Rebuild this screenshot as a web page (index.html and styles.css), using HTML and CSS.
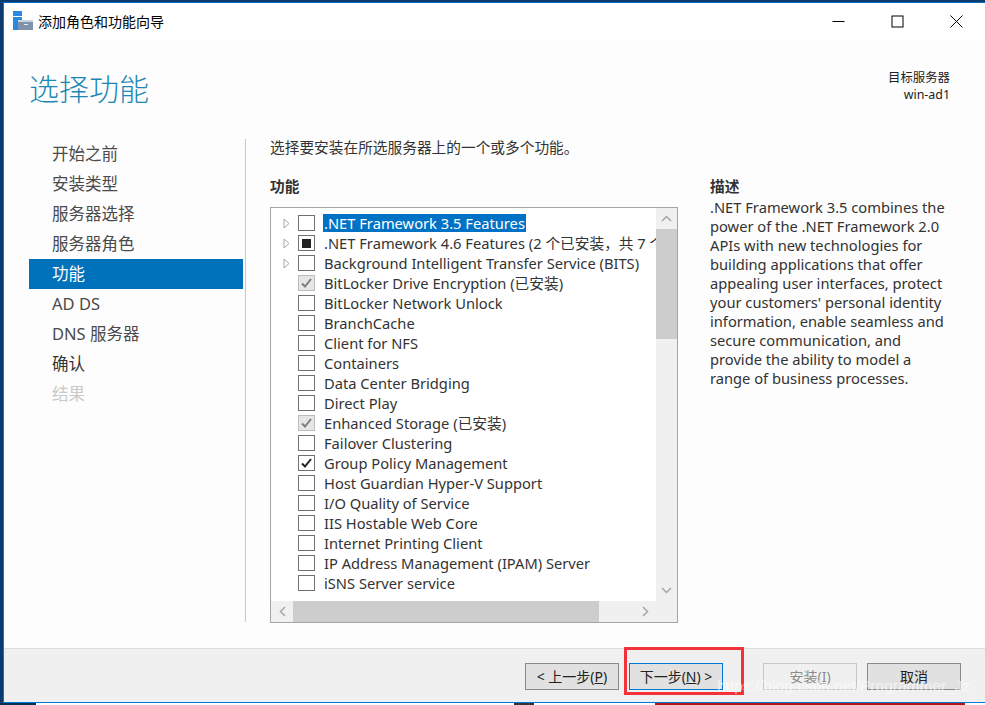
FILE: index.html
```html
<!DOCTYPE html>
<html lang="zh-CN">
<head>
<meta charset="utf-8">
<title>添加角色和功能向导</title>
<link rel="stylesheet" href="styles.css">
</head>
<body>
<div class="desktop">
  <div class="window">
    <header class="titlebar">
      <svg class="app-icon" width="20" height="20" viewBox="0 0 20 20">
        <rect x="0" y="0" width="9" height="5" fill="#2b8ae0"/>
        <rect x="0" y="6" width="9" height="13" fill="#2b8ae0"/>
        <rect x="5" y="9" width="15" height="2" fill="#c9d3df"/>
        <rect x="5" y="11" width="15" height="8" fill="#7f93ad"/>
        <rect x="11" y="13" width="4" height="1" fill="#e8eef5"/>
      </svg>
      <span class="title">添加角色和功能向导</span>
      <div class="controls">
        <svg width="13" height="13" viewBox="0 0 13 13"><path d="M0.5 6.5H12.5" stroke="#000" fill="none"/></svg>
        <svg width="13" height="13" viewBox="0 0 13 13"><rect x="1" y="1" width="11" height="11" stroke="#000" fill="none"/></svg>
        <svg width="13" height="13" viewBox="0 0 13 13"><path d="M0.5 0.5L12.5 12.5M12.5 0.5L0.5 12.5" stroke="#000" fill="none"/></svg>
      </div>
    </header>

    <main class="content">
      <div class="head">
        <h1 class="heading">选择功能</h1>
        <div class="server"><div>目标服务器</div><div>win-ad1</div></div>
      </div>
      <div class="body">
        <nav class="nav">
          <div class="nav-item">开始之前</div>
          <div class="nav-item">安装类型</div>
          <div class="nav-item">服务器选择</div>
          <div class="nav-item">服务器角色</div>
          <div class="nav-item active">功能</div>
          <div class="nav-item">AD DS</div>
          <div class="nav-item">DNS 服务器</div>
          <div class="nav-item strong">确认</div>
          <div class="nav-item off">结果</div>
        </nav>
        <section class="pane">
          <p class="intro">选择要安装在所选服务器上的一个或多个功能。</p>
          <div class="columns">
            <div class="features">
              <h2 class="label">功能</h2>
              <div class="listbox">
                <div class="list-main">
                  <div class="rows">
                    <div class="row"><svg class="tw" width="7" height="11" viewBox="0 0 7 11"><path d="M1 1L6 5.5L1 10Z" fill="#fff" stroke="#a6a6a6"/></svg><span class="cb"></span><span class="txt sel">.NET Framework 3.5 Features</span></div>
                    <div class="row"><svg class="tw" width="7" height="11" viewBox="0 0 7 11"><path d="M1 1L6 5.5L1 10Z" fill="#fff" stroke="#a6a6a6"/></svg><span class="cb part"><i></i></span><span class="txt">.NET Framework 4.6 Features (2 个已安装，共 7 个)</span></div>
                    <div class="row"><svg class="tw" width="7" height="11" viewBox="0 0 7 11"><path d="M1 1L6 5.5L1 10Z" fill="#fff" stroke="#a6a6a6"/></svg><span class="cb"></span><span class="txt">Background Intelligent Transfer Service (BITS)</span></div>
                    <div class="row"><span class="tw-gap"></span><span class="cb dis"><svg width="15" height="14" viewBox="0 0 15 14"><path d="M3 7.5L6 10.5L12 3" fill="none" stroke="#7d7d7d" stroke-width="2"/></svg></span><span class="txt">BitLocker Drive Encryption (已安装)</span></div>
                    <div class="row"><span class="tw-gap"></span><span class="cb"></span><span class="txt">BitLocker Network Unlock</span></div>
                    <div class="row"><span class="tw-gap"></span><span class="cb"></span><span class="txt">BranchCache</span></div>
                    <div class="row"><span class="tw-gap"></span><span class="cb"></span><span class="txt">Client for NFS</span></div>
                    <div class="row"><span class="tw-gap"></span><span class="cb"></span><span class="txt">Containers</span></div>
                    <div class="row"><span class="tw-gap"></span><span class="cb"></span><span class="txt">Data Center Bridging</span></div>
                    <div class="row"><span class="tw-gap"></span><span class="cb"></span><span class="txt">Direct Play</span></div>
                    <div class="row"><span class="tw-gap"></span><span class="cb dis"><svg width="15" height="14" viewBox="0 0 15 14"><path d="M3 7.5L6 10.5L12 3" fill="none" stroke="#7d7d7d" stroke-width="2"/></svg></span><span class="txt">Enhanced Storage (已安装)</span></div>
                    <div class="row"><span class="tw-gap"></span><span class="cb"></span><span class="txt">Failover Clustering</span></div>
                    <div class="row"><span class="tw-gap"></span><span class="cb"><svg width="15" height="14" viewBox="0 0 15 14"><path d="M3 7.5L6 10.5L12 3" fill="none" stroke="#222" stroke-width="2"/></svg></span><span class="txt">Group Policy Management</span></div>
                    <div class="row"><span class="tw-gap"></span><span class="cb"></span><span class="txt">Host Guardian Hyper-V Support</span></div>
                    <div class="row"><span class="tw-gap"></span><span class="cb"></span><span class="txt">I/O Quality of Service</span></div>
                    <div class="row"><span class="tw-gap"></span><span class="cb"></span><span class="txt">IIS Hostable Web Core</span></div>
                    <div class="row"><span class="tw-gap"></span><span class="cb"></span><span class="txt">Internet Printing Client</span></div>
                    <div class="row"><span class="tw-gap"></span><span class="cb"></span><span class="txt">IP Address Management (IPAM) Server</span></div>
                    <div class="row"><span class="tw-gap"></span><span class="cb"></span><span class="txt">iSNS Server service</span></div>
                  </div>
                  <div class="vscroll">
                    <div class="sb-btn v"><svg width="11" height="7" viewBox="0 0 11 7"><path d="M1 6L5.5 1.5L10 6" fill="none" stroke="#a6a6a6" stroke-width="1.5"/></svg></div>
                    <div class="vthumb"></div>
                    <div class="sb-track"></div>
                    <div class="sb-btn v"><svg width="11" height="7" viewBox="0 0 11 7"><path d="M1 1L5.5 5.5L10 1" fill="none" stroke="#a6a6a6" stroke-width="1.5"/></svg></div>
                  </div>
                </div>
                <div class="hscroll">
                  <div class="sb-btn h"><svg width="7" height="11" viewBox="0 0 7 11"><path d="M6 1L1.5 5.5L6 10" fill="none" stroke="#a6a6a6" stroke-width="1.5"/></svg></div>
                  <div class="hthumb"></div>
                  <div class="sb-track"></div>
                  <div class="sb-btn h"><svg width="7" height="11" viewBox="0 0 7 11"><path d="M1 1L5.5 5.5L1 10" fill="none" stroke="#a6a6a6" stroke-width="1.5"/></svg></div>
                  <div class="corner"></div>
                </div>
              </div>
            </div>
            <aside class="desc">
              <h2 class="label">描述</h2>
              <p class="desc-text">.NET Framework 3.5 combines the<br>power of the .NET Framework 2.0<br>APIs with new technologies for<br>building applications that offer<br>appealing user interfaces, protect<br>your customers' personal identity<br>information, enable seamless and<br>secure communication, and<br>provide the ability to model a<br>range of business processes.</p>
            </aside>
          </div>
        </section>
      </div>
    </main>

    <footer class="footer">
      <button class="btn">&lt; 上一步(<u>P</u>)</button>
      <button class="btn focus">下一步(<u>N</u>) &gt;</button>
      <button class="btn disabled">安装(<u>I</u>)</button>
      <button class="btn">取消</button>
    </footer>
  </div>
  <div class="taskstrip">
    <span class="seg s1"></span><span class="seg s2"></span><span class="seg s3"></span><span class="seg s4"></span><span class="seg s5"></span><span class="seg s6"></span><span class="seg s7"></span>
  </div>
  <div class="redbox"></div>
  <div class="watermark">https://blog.csdn.net/Programmer_Jz</div>
</div>
</body>
</html>
```
FILE: styles.css
```css
* { box-sizing: border-box; }
html, body { margin: 0; padding: 0; }
body {
  width: 985px;
  height: 705px;
  overflow: hidden;
  font-family: "Noto Sans", "Noto Sans CJK SC", sans-serif;
}
.desktop {
  position: relative;
  width: 985px;
  height: 705px;
  padding-top: 2px;
  background: #0a3a6e;
  overflow: hidden;
}
.window {
  margin-left: 3px;
  height: 701px;
  display: flex;
  flex-direction: column;
  border-top: 1px solid #0a6cc0;
  border-left: 1px solid #0078d7;
  border-bottom: 1px solid #0078d7;
  background: #fdfdfd;
}
.titlebar {
  flex: none;
  height: 37px;
  display: flex;
  align-items: center;
  padding-left: 9px;
  background: #fff;
}
.app-icon { flex: none; margin-top: -2px; }
.title {
  margin-left: 5px;
  margin-top: -1px;
  font-size: 14px;
  color: #000;
}
.controls {
  margin-left: auto;
  margin-right: 22px;
  display: flex;
  gap: 46px;
  margin-top: -1px;
}
.content { flex: 1; min-height: 0; display: flex; flex-direction: column; }
.head {
  flex: none;
  height: 99px;
  display: flex;
  justify-content: space-between;
  padding: 29px 35px 0 25px;
}
.heading {
  margin: 0;
  font-size: 30px;
  line-height: 40px;
  font-weight: 300;
  color: #1c87b4;
}
.server {
  font-size: 12.4px;
  line-height: 17px;
  text-align: right;
  color: #222;
  margin-top: 0;
}
.body { flex: 1; min-height: 0; display: flex; padding-left: 25px; }
.nav {
  flex: none;
  width: 217px;
  height: 483px;
  border-right: 1px solid #c8c8c8;
  padding-right: 2px;
}
.nav-item {
  height: 30px;
  line-height: 30px;
  padding-left: 23px;
  font-size: 16.5px;
  color: #4a4a4a;
}
.nav-item.active { background: #0072bc; color: #fff; }
.nav-item.strong { color: #333; }
.nav-item.off { color: #c9c9c9; }
.pane { flex: 1; min-width: 0; padding-left: 24px; }
.intro {
  margin: 0;
  height: 38px;
  font-size: 14.7px;
  line-height: 17px;
  color: #333;
}
.columns { display: flex; }
.features { flex: none; width: 408px; }
.label {
  margin: 0;
  height: 30px;
  font-size: 14.7px;
  line-height: 19px;
  font-weight: 700;
  color: #333;
}
.listbox {
  width: 408px;
  height: 416px;
  border: 1px solid #a5a5a5;
  background: #fff;
  display: flex;
  flex-direction: column;
}
.list-main { flex: 1; min-height: 0; display: flex; }
.rows {
  flex: 1;
  min-width: 0;
  padding-top: 5px;
  overflow: hidden;
}
.row {
  height: 20px;
  display: flex;
  align-items: center;
  padding-left: 12px;
  white-space: nowrap;
}
.tw { flex: none; }
.tw-gap { flex: none; width: 7px; }
.cb {
  flex: none;
  width: 17px;
  height: 16px;
  margin-left: 8px;
  border: 1px solid #707070;
  background: #fff;
  display: flex;
  align-items: center;
  justify-content: center;
}
.cb.dis { background: #e6e6e6; border-color: #bcbcbc; }
.cb.part i { display: block; width: 9px; height: 9px; background: #222; }
.txt {
  margin-left: 9px;
  font-size: 14.7px;
  line-height: 18px;
  color: #333;
}
.txt.sel { background: #0072c6; color: #fff; padding: 0 1px; margin-left: 8px; }
.vscroll {
  flex: none;
  width: 21px;
  background: #f0f0f0;
  display: flex;
  flex-direction: column;
}
.sb-btn { flex: none; display: flex; align-items: center; justify-content: center; }
.sb-btn.v { height: 21px; }
.sb-btn.h { width: 22px; }
.vthumb { flex: none; height: 110px; background: #cdcdcd; }
.sb-track { flex: 1; }
.hscroll {
  flex: none;
  height: 21px;
  background: #f0f0f0;
  display: flex;
}
.hthumb { flex: none; width: 306px; background: #cdcdcd; }
.corner { flex: none; width: 21px; }
.desc { flex: none; width: 260px; padding-left: 32px; }
.desc-text {
  margin: 0;
  font-size: 14.7px;
  line-height: 19px;
  color: #333;
  white-space: nowrap;
}
.desc .label { height: 21px; }
.footer {
  flex: none;
  height: 54px;
  display: flex;
  gap: 10px;
  padding: 14px 24px 0 0;
  justify-content: flex-end;
  background: #f0f0f0;
  border-top: 1px solid #dcdcdc;
}
.btn {
  width: 94px;
  height: 27px;
  padding: 0;
  border: 1px solid #8a8a8a;
  background: #e1e1e1;
  font-family: inherit;
  font-size: 14px;
  line-height: 20px;
  color: #222;
}
.btn.focus { border-color: #0078d7; margin-right: 30px; }
.btn.disabled { border-color: #c6c6c6; background: #f0f0f0; color: #8c8c8c; }
.taskstrip {
  display: flex;
  height: 2px;
  background: #fff;
}
.seg { display: block; height: 2px; flex: none; }
.s1 { width: 36px; background: #0a2f57; }
.s2 { width: 298px; background: #fff; }
.s3 { width: 180px; background: #fff; }
.s4 { width: 20px; background: #333; }
.s5 { width: 121px; background: #fff; }
.s6 { width: 23px; background: #b01818; }
.s7 { width: 287px; background: #b01818; }
.redbox {
  position: absolute;
  left: 624px;
  top: 647px;
  width: 120px;
  height: 48px;
  border: 3px solid #f33138;
}
.watermark {
  position: absolute;
  left: 717px;
  top: 676px;
  font-family: "Liberation Sans", sans-serif;
  font-size: 15.5px;
  line-height: 20px;
  color: rgba(255, 255, 255, 0.62);
  white-space: nowrap;
}
```
